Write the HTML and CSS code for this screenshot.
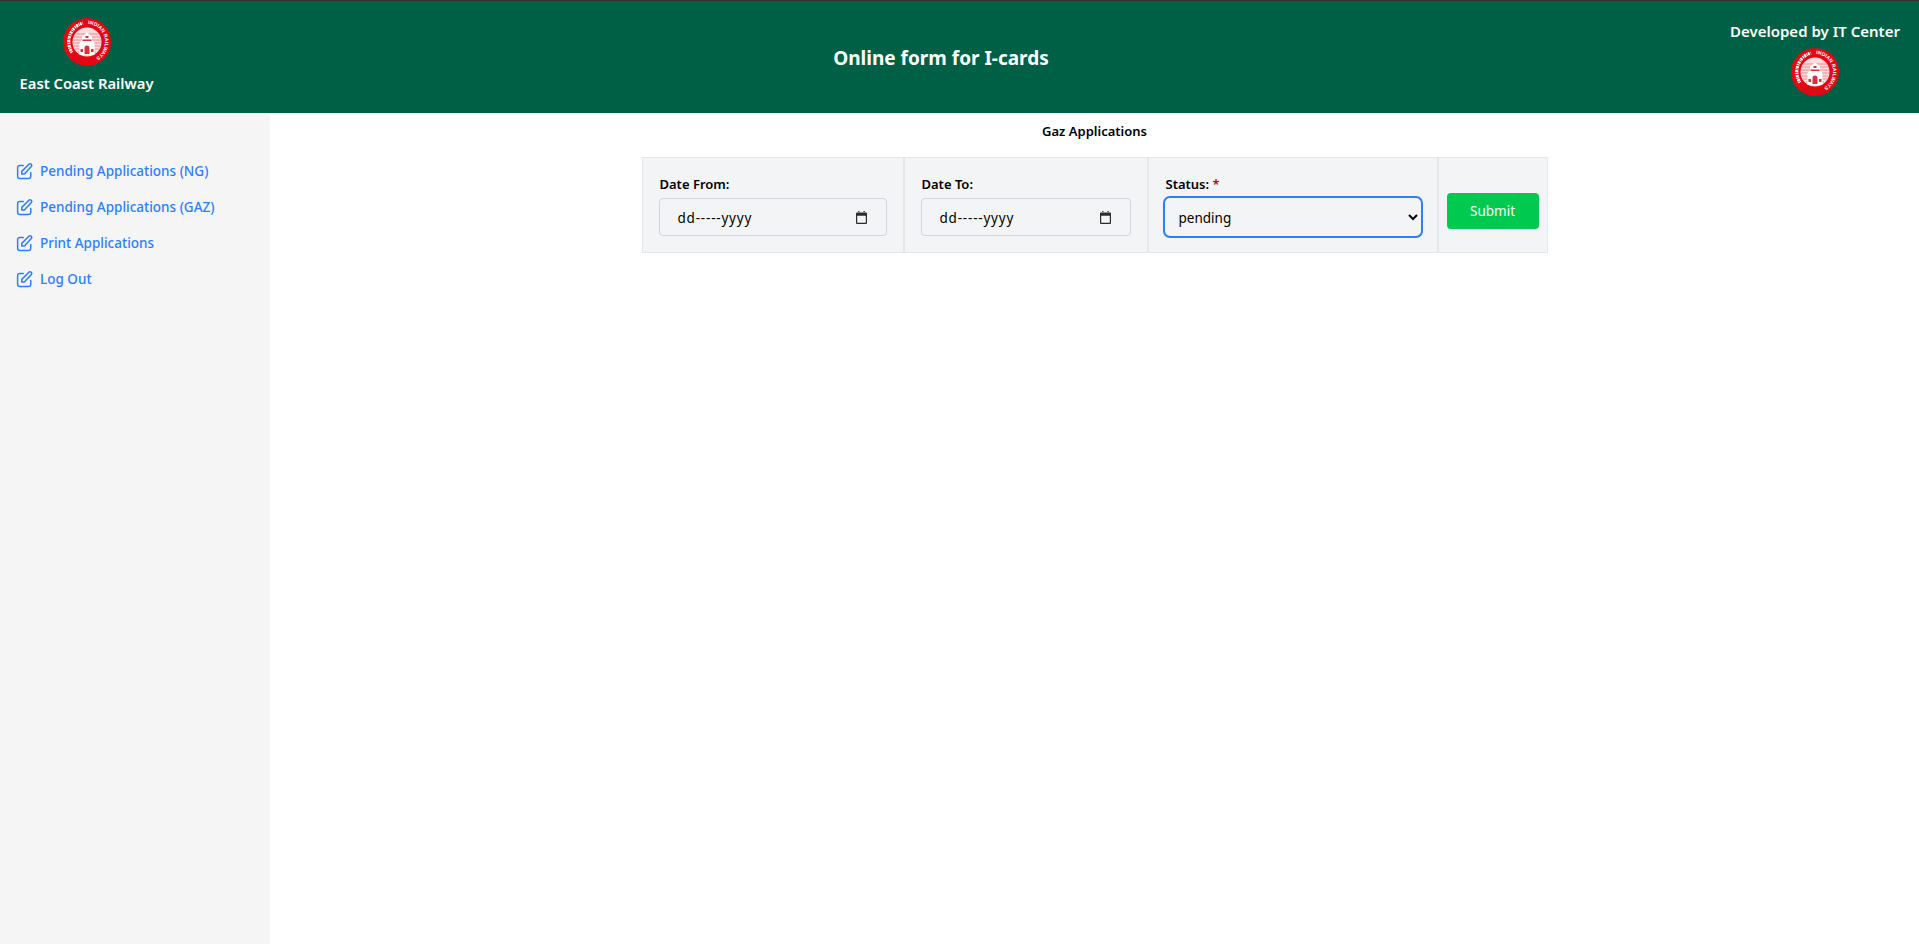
FILE: index.html
```html
<!DOCTYPE html>
<html lang="en">
<head>
<meta charset="utf-8">
<title>Online form for I-cards</title>
<link rel="stylesheet" href="styles.css">
</head>
<body>
<svg class="defs" width="0" height="0" aria-hidden="true">
  <defs>
    <symbol id="logo" viewBox="0 0 48 48">
      <circle cx="24" cy="24" r="24" fill="#e30613"/>
      <path id="ring" d="M24 6a18 18 0 1 1-0.01 0" fill="none"/>
      <text font-family="Liberation Sans" font-size="5" font-weight="700" fill="#fff"><textPath href="#ring" startOffset="1" textLength="46">INDIAN RAILWAYS</textPath></text>
      <path d="M9 34.500A19.500 19.500 0 0 1 20 5" fill="none" stroke="#fff" stroke-width="3.200" stroke-dasharray="1.200 .7 2 .8 .9 .6 1.800 1"/>
      <circle cx="24" cy="24" r="14.500" fill="#fbdcdc"/>
      <g stroke="#ec7a80" stroke-width=".8" fill="none">
        <path d="M12 16h24M11 19h26M10 22h28M10 25h28M11 28h26M12 31h24M15 34h18"/>
      </g>
      <path d="M16.500 37V25l2.500-3v-3.500l5-4 5 4V22l2.500 3v12z" fill="#fff"/>
      <path d="M21.500 36v-6a2.500 2.500 0 0 1 5 0v6zM19.500 21.500h9v1.500h-9zM22.500 18h3v2h-3zM17.500 31h2.500v3h-2.500zM28 31h2.500v3H28z" fill="#d9303c"/>
    </symbol>
    <symbol id="edit" viewBox="0 0 24 24">
      <path d="M11 4.500H6.500a3 3 0 0 0-3 3V19a3 3 0 0 0 3 3H18a3 3 0 0 0 3-3v-5" fill="none" stroke="currentColor" stroke-width="2" stroke-linecap="round"/>
      <path d="M9 16v-3.500L18.600 2.900a2.200 2.200 0 0 1 3.100 3.100L12.500 16z" fill="none" stroke="currentColor" stroke-width="2" stroke-linejoin="round"/>
    </symbol>
    <symbol id="calendar" viewBox="0 0 11 13">
      <path d="M1 1.500h9a1 1 0 0 1 1 1v9.500a1 1 0 0 1-1 1H1a1 1 0 0 1-1-1V2.500a1 1 0 0 1 1-1zM1.200 4.700v7.100h8.600V4.700zM2.200 0h1.300v2H2.200zM7.500 0h1.300v2H7.500z" fill="#2b2b2b" fill-rule="evenodd"/>
    </symbol>
  </defs>
</svg>
<header class="topbar">
  <div class="brand">
    <svg class="logo"><use href="#logo"/></svg>
    <span>East Coast Railway</span>
  </div>
  <h1 class="title">Online form for I-cards</h1>
  <div class="credit">
    <span>Developed by IT Center</span>
    <svg class="logo"><use href="#logo"/></svg>
  </div>
</header>
<div class="shell">
  <nav class="sidebar">
    <a class="nav-link" href="#"><svg class="nav-icon"><use href="#edit"/></svg>Pending Applications (NG)</a>
    <a class="nav-link" href="#"><svg class="nav-icon"><use href="#edit"/></svg>Pending Applications (GAZ)</a>
    <a class="nav-link" href="#"><svg class="nav-icon"><use href="#edit"/></svg>Print Applications</a>
    <a class="nav-link" href="#"><svg class="nav-icon"><use href="#edit"/></svg>Log Out</a>
  </nav>
  <main class="content">
    <h2 class="heading">Gaz Applications</h2>
    <form class="filter">
      <div class="cell">
        <label class="field-label">Date From:</label>
        <div class="date-field"><input class="date-text" type="text" value="dd-----yyyy"><svg class="cal"><use href="#calendar"/></svg></div>
      </div>
      <div class="cell">
        <label class="field-label">Date To:</label>
        <div class="date-field"><input class="date-text" type="text" value="dd-----yyyy"><svg class="cal"><use href="#calendar"/></svg></div>
      </div>
      <div class="cell">
        <label class="field-label">Status: <span class="req">*</span></label>
        <select class="status"><option>pending</option></select>
      </div>
      <div class="cell cell-action">
        <button class="submit" type="button">Submit</button>
      </div>
    </form>
  </main>
</div>
</body>
</html>
```
FILE: styles.css
```css
* { box-sizing: border-box; }
html, body { height: 100%; }
body {
  margin: 0;
  display: flex;
  flex-direction: column;
  overflow: hidden;
  background: #fff;
  color: #000;
  font-family: "Noto Sans", "Open Sans", sans-serif;
}
.defs { position: absolute; }
.topbar {
  height: 113px;
  flex: none;
  display: grid;
  grid-template-columns: 173px 1fr 210px;
  align-items: center;
  background: #006045;
  border-top: 1px solid #333;
  color: #fff;
  font-weight: 600;
}
.brand {
  display: flex;
  flex-direction: column;
  align-items: center;
  gap: 7px;
  font-size: 14.800px;
  padding-bottom: 4px;
}
.logo { width: 48px; height: 48px; display: block; }
.title {
  margin: 0;
  padding-top: 2px;
  text-align: center;
  font-size: 19px;
  font-weight: 700;
}
.credit {
  display: flex;
  flex-direction: column;
  align-items: center;
  gap: 7px;
  font-size: 15px;
  padding: 3px 0 0 2px;
}
.shell { flex: 1; display: flex; min-height: 0; }
.sidebar {
  width: 270px;
  flex: none;
  background: #f5f5f5;
  padding: 47px 15px 0;
  display: flex;
  flex-direction: column;
  gap: 15px;
}
.nav-link {
  display: flex;
  align-items: center;
  gap: 7px;
  height: 21px;
  color: #2b7fff;
  font-size: 13.500px;
  font-weight: 550;
  text-decoration: none;
}
.nav-icon { width: 18px; height: 18px; flex: none; }
.content {
  flex: 1;
  display: flex;
  flex-direction: column;
  align-items: center;
}
.heading {
  margin: 9px 0 17px;
  height: 18px;
  line-height: 18px;
  font-size: 13px;
  font-weight: 600;
}
.filter {
  display: grid;
  grid-template-columns: 262px 244px 290px 108px;
  height: 96px;
  background: #f3f4f6;
  border: 1px solid #e5e7eb;
}
.cell {
  padding: 16px 16px 0;
  border-right: 2px solid #e5e7eb;
}
.cell:last-child { border-right: 0; }
.cell-action {
  display: flex;
  align-items: center;
  padding: 12px 8px 0;
  justify-content: center;
}
.field-label {
  display: block;
  height: 21px;
  padding-left: 1px;
  line-height: 21px;
  font-size: 13px;
  font-weight: 600;
  margin-bottom: 3px;
}
.req { color: #c10007; }
.date-field {
  height: 38px;
  display: flex;
  align-items: center;
  border: 1px solid #d1d5dc;
  border-radius: 4px;
  padding: 1px 19px 0 18px;
}
.date-text {
  flex: 1;
  min-width: 0;
  border: 0;
  outline: 0;
  padding: 0;
  background: transparent;
  font-family: inherit;
  font-size: 13.500px;
  letter-spacing: .8px;
  color: #000;
}
.cal { width: 11px; height: 13px; flex: none; }
.status {
  display: block;
  width: calc(100% + 4px);
  height: 42px;
  margin: -2px -2px 0;
  border: 2px solid #2b7fff;
  border-radius: 7px;
  padding: 2px 10px 0;
  background: #f3f4f6;
  font-family: inherit;
  font-size: 13.500px;
  color: #000;
  outline: 0;
}
.submit {
  width: 92px;
  height: 36px;
  border: 0;
  border-radius: 4px;
  background: #00c950;
  color: #fff;
  font-family: inherit;
  font-size: 13.500px;
}
```
